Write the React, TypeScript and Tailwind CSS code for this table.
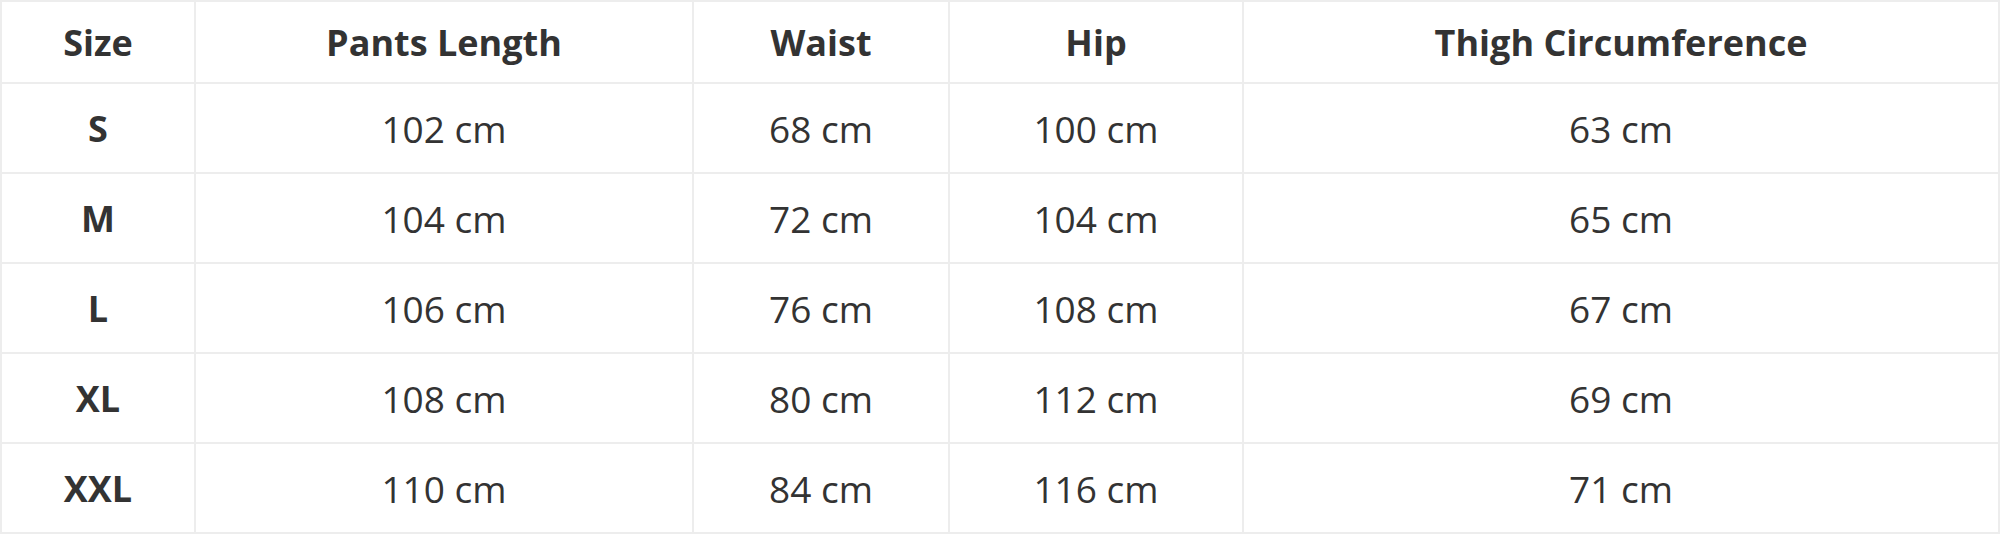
import React from "react";

const rows = [
  ["S", "102 cm", "68 cm", "100 cm", "63 cm"],
  ["M", "104 cm", "72 cm", "104 cm", "65 cm"],
  ["L", "106 cm", "76 cm", "108 cm", "67 cm"],
  ["XL", "108 cm", "80 cm", "112 cm", "69 cm"],
  ["XXL", "110 cm", "84 cm", "116 cm", "71 cm"],
];

const headers = ["Size", "Pants Length", "Waist", "Hip", "Thigh Circumference"];

const App = () => {
  return (
    <div
      className="w-[2000px] h-[534px] bg-[#ededed] p-[2px] grid grid-cols-[192px_496px_254px_292px_1fr] grid-rows-[80px_repeat(5,88px)] gap-[2px] text-[#333333]"
      style={{ fontFamily: '"Open Sans", "Noto Sans", sans-serif' }}
    >
      {headers.map((h) => (
        <div key={h} className="bg-white flex items-center justify-center pt-[2px] font-bold text-[36px]">
          {h}
        </div>
      ))}
      {rows.map((r) =>
        r.map((c, i) => (
          <div
            key={r[0] + i}
            className={
              "bg-white flex items-center justify-center pt-[2px] " +
              (i === 0 ? "font-bold text-[36px]" : "font-normal text-[37px]")
            }
          >
            {c}
          </div>
        ))
      )}
    </div>
  );
};

export default App;
